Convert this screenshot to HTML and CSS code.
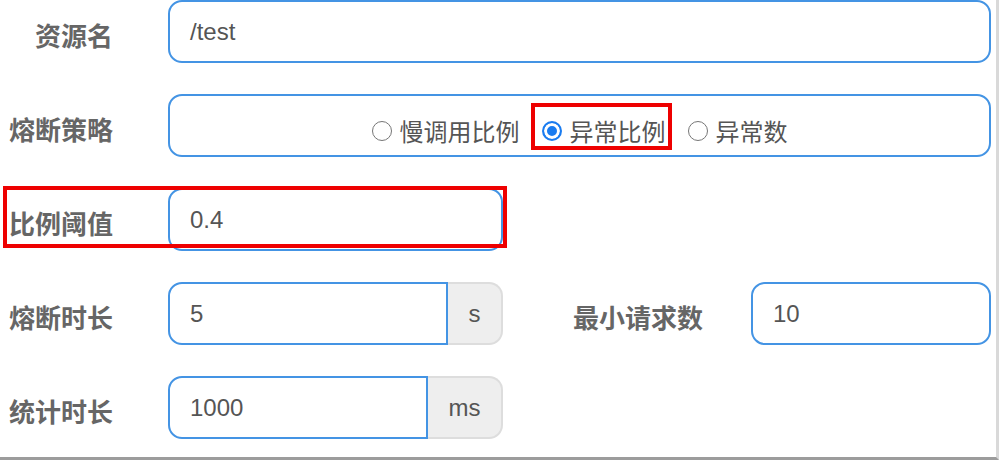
FILE: index.html
```html
<!DOCTYPE html>
<html lang="zh-CN">
<head>
<meta charset="utf-8">
<title>熔断规则</title>
<link rel="stylesheet" href="styles.css">
</head>
<body>
<div class="page">
  <div class="row">
    <div class="lbl">资源名</div>
    <div class="box wide">/test</div>
  </div>
  <div class="row">
    <div class="lbl">熔断策略</div>
    <div class="box wide radios">
      <div class="opt"><span class="dot"></span><span class="otext">慢调用比例</span></div>
      <div class="opt sel"><span class="dot on"></span><span class="otext">异常比例</span><span class="mark mark-opt"></span></div>
      <div class="opt"><span class="dot"></span><span class="otext">异常数</span></div>
    </div>
  </div>
  <div class="row marked">
    <div class="lbl">比例阈值</div>
    <div class="box half">0.4</div>
    <span class="mark mark-row"></span>
  </div>
  <div class="row">
    <div class="lbl">熔断时长</div>
    <div class="group">
      <div class="box gbox">5</div>
      <div class="addon">s</div>
    </div>
    <div class="lbl lbl2">最小请求数</div>
    <div class="box small">10</div>
  </div>
  <div class="row">
    <div class="lbl">统计时长</div>
    <div class="group">
      <div class="box gbox">1000</div>
      <div class="addon wide-addon">ms</div>
    </div>
  </div>
</div>
</body>
</html>
```
FILE: styles.css
```css
html, body {
  margin: 0;
  padding: 0;
  background: #fff;
}

.page {
  width: 996px;
  height: 457px;
  border-right: 3px solid #d9d9d9;
  border-bottom: 3px solid #9c9c9c;
  display: flex;
  flex-direction: column;
  gap: 31px;
  overflow: hidden;
}

.row {
  display: flex;
  align-items: center;
  height: 63px;
  flex: none;
}

.marked {
  position: relative;
}

.lbl {
  width: 113px;
  flex: none;
  text-align: right;
  margin-right: 55px;
  padding-top: 7px;
  font: 700 26px/1.2 "Noto Sans CJK SC", sans-serif;
  color: #666;
}

.lbl2 {
  width: auto;
  margin-left: 70px;
  margin-right: 48px;
}

.box {
  box-sizing: border-box;
  height: 63px;
  border: 2px solid #4494e4;
  border-radius: 14px;
  padding-left: 20px;
  display: flex;
  align-items: center;
  font: 24px/1 "Liberation Sans", Arial, sans-serif;
  color: #555;
  background: #fff;
}

.wide { width: 823px; }
.half { width: 335px; }
.small { width: 240px; }

.group {
  display: flex;
  width: 335px;
  height: 63px;
  flex: none;
}

.gbox {
  flex: 1;
  border-radius: 14px 0 0 14px;
}

.addon {
  box-sizing: border-box;
  width: 55px;
  height: 63px;
  background: #eee;
  border: 2px solid #ddd;
  border-left: none;
  border-radius: 0 14px 14px 0;
  display: flex;
  align-items: center;
  justify-content: center;
  font: 24px/1 "Liberation Sans", Arial, sans-serif;
  color: #555;
}

.wide-addon { width: 75px; }

.radios {
  justify-content: center;
  padding-left: 0;
  padding-top: 11px;
  gap: 22px;
}

.opt {
  position: relative;
  display: flex;
  align-items: center;
  gap: 8px;
  height: 30px;
}

.otext {
  font: 24px/1 "Noto Sans CJK SC", sans-serif;
  color: #555;
}

.dot {
  box-sizing: border-box;
  width: 20px;
  height: 20px;
  border-radius: 50%;
  border: 1.5px solid #767676;
  background: #fff;
  flex: none;
}

.dot.on {
  border: 2px solid #1a7cf0;
  background: #1a7cf0;
  box-shadow: inset 0 0 0 3px #fff;
}

.mark {
  position: absolute;
  box-sizing: border-box;
  border: 4px solid #ee0000;
  pointer-events: none;
}

.mark-opt {
  left: -11px;
  right: -6px;
  top: -13px;
  bottom: -4px;
}

.mark-row {
  left: 3px;
  top: -2px;
  width: 504px;
  height: 62px;
}
```
